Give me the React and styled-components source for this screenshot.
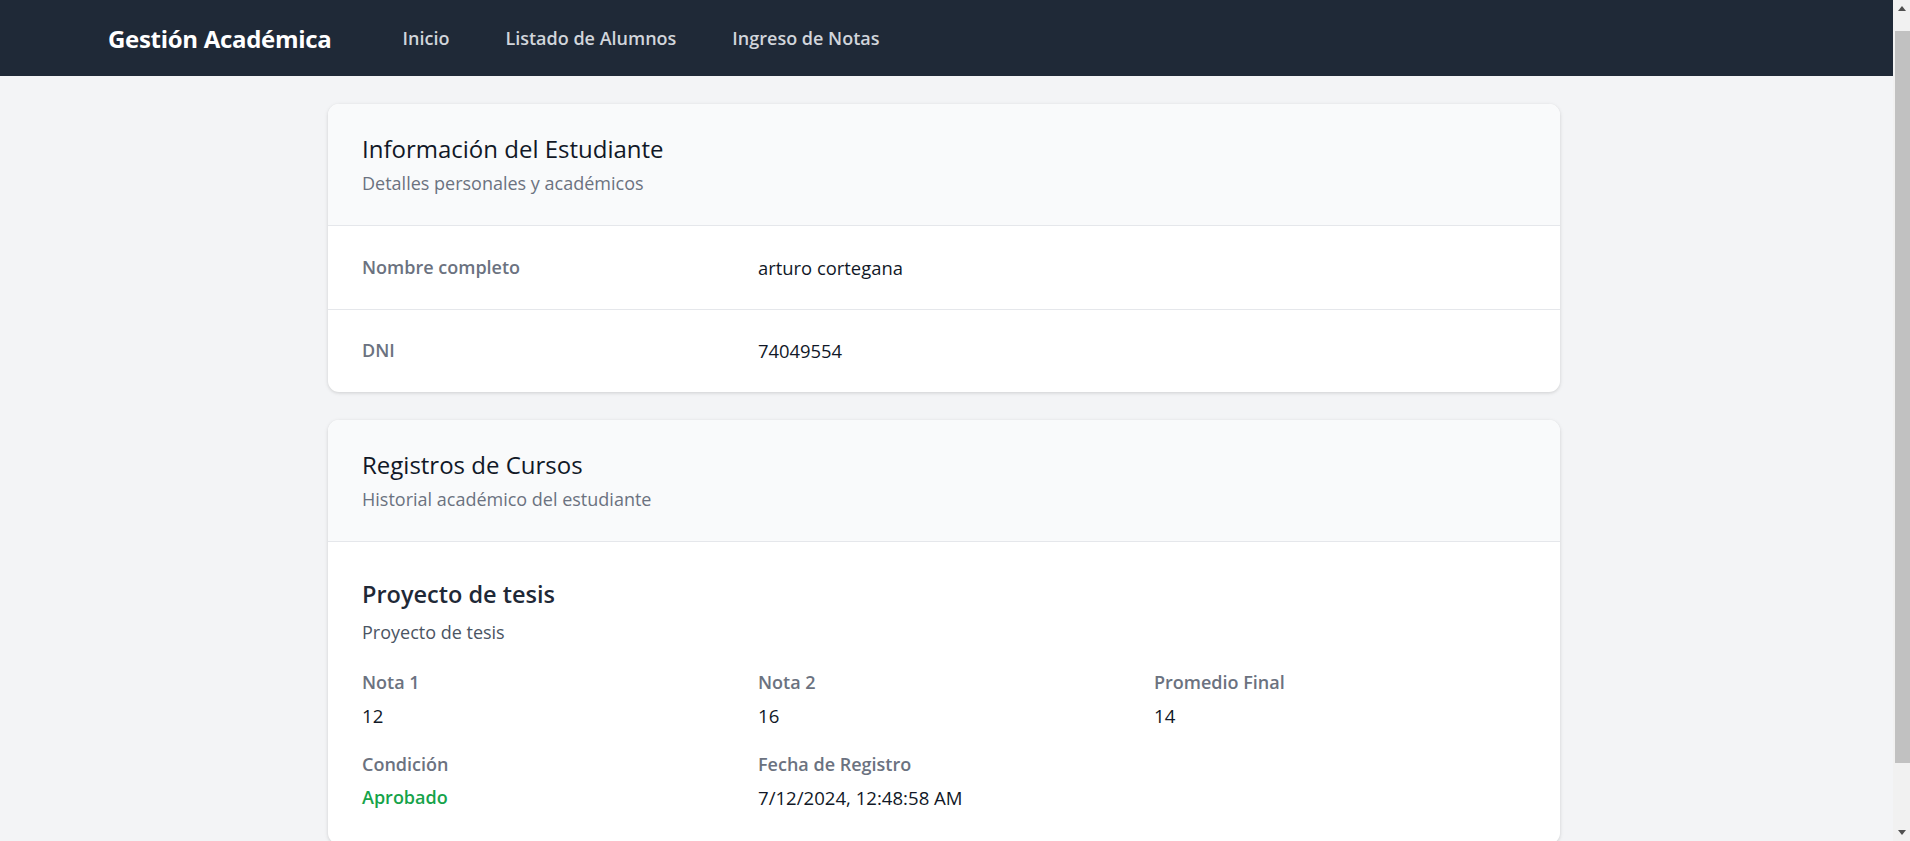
import React from "react";
import styled, { createGlobalStyle } from "styled-components";

const GlobalStyle = createGlobalStyle`
  * {
    box-sizing: border-box;
  }

  html,
  body {
    margin: 0;
    padding: 0;
    height: 100%;
    overflow: hidden;
  }

  body {
    font-family: "Open Sans", "Noto Sans", sans-serif;
    background: #f3f4f6;
    color: #111827;
  }
`;

const student = {
  nombre: "arturo cortegana",
  dni: "74049554",
};

const cursos = [
  {
    id: 1,
    titulo: "Proyecto de tesis",
    descripcion: "Proyecto de tesis",
    nota1: 12,
    nota2: 16,
    promedio: 14,
    condicion: "Aprobado",
    fecha: "7/12/2024, 12:48:58 AM",
  },
];

// window frame: page area + the browser's classic scrollbar on the right
const Page = styled.div`
  display: flex;
  height: 100vh;
`;

const Viewport = styled.div`
  flex: 1;
  min-width: 0;
  overflow: hidden;
  background: #f3f4f6;
`;

const ScrollTrack = styled.div`
  width: 17px;
  flex-shrink: 0;
  background: #f1f1f1;
  display: flex;
  flex-direction: column;
`;

const ScrollArrow = styled.div`
  height: 17px;
  display: flex;
  align-items: center;
  justify-content: center;
  margin-top: ${(p) => (p.$down ? "auto" : "0")};

  &::before {
    content: "";
    border-left: 4.5px solid transparent;
    border-right: 4.5px solid transparent;
    ${(p) =>
      p.$down
        ? "border-top: 5px solid #505050;"
        : "border-bottom: 5px solid #505050;"}
  }
`;

const ScrollThumb = styled.div`
  height: 732px;
  margin: 14px 0 0 2px;
  background: #c1c1c1;
`;

const Navbar = styled.nav`
  height: 76px;
  background: #1f2937;
  display: flex;
  align-items: center;
  gap: 71px;
  padding-left: 108px;
`;

const Brand = styled.a`
  font-size: 24px;
  font-weight: 700;
  color: #ffffff;
  text-decoration: none;
  letter-spacing: -0.3px;
`;

const NavLinks = styled.div`
  display: flex;
  gap: 56px;
`;

const NavLink = styled.a`
  font-size: 18px;
  font-weight: 600;
  color: #d1d5db;
  text-decoration: none;
`;

const Main = styled.main`
  display: flex;
  flex-direction: column;
  align-items: center;
  gap: 28px;
  padding: 28px 5px 68px 0;
`;

const Card = styled.section`
  width: 1232px;
  background: #ffffff;
  border-radius: 11px;
  overflow: hidden;
  box-shadow: 0 1px 4px rgba(0, 0, 0, 0.1), 0 1px 3px rgba(0, 0, 0, 0.06);
`;

const CardHeader = styled.header`
  background: #f9fafb;
  padding: 27.5px 34px;
  border-bottom: 1px solid #e5e7eb;
`;

const CardTitle = styled.h2`
  margin: 0;
  font-size: 24px;
  font-weight: 400;
  line-height: 33px;
  color: #111827;
`;

const CardSubtitle = styled.p`
  margin: 5.5px 0 0;
  font-size: 18px;
  line-height: 27.5px;
  color: #6b7280;
`;

const InfoList = styled.dl`
  margin: 0;
`;

const InfoRow = styled.div`
  display: grid;
  grid-template-columns: repeat(3, 1fr);
  column-gap: 24px;
  padding: 27.5px 34px;
  font-size: 18px;
  line-height: 27.5px;

  & + & {
    border-top: 1px solid #e5e7eb;
  }
`;

const Term = styled.dt`
  font-weight: 600;
  color: #6b7280;
`;

const Detail = styled.dd`
  margin: 0;
  grid-column: span 2;
  color: #111827;
  font-size: 18.4px;
`;

const CourseBody = styled.div`
  padding: 33px 34px;
`;

const CourseTitle = styled.h3`
  margin: 0;
  font-size: 23.5px;
  font-weight: 600;
  line-height: 38.5px;
  color: #1f2937;
`;

const CourseDesc = styled.p`
  margin: 5.5px 0 0;
  font-size: 18px;
  line-height: 27.5px;
  color: #4b5563;
`;

const FieldGrid = styled.div`
  display: grid;
  grid-template-columns: repeat(3, 1fr);
  column-gap: 24px;
  row-gap: 21px;
  margin-top: 22.5px;
  font-size: 18px;
  line-height: 27.5px;
`;

const FieldLabel = styled.div`
  font-weight: 600;
  color: #6b7280;
`;

const FieldValue = styled.div`
  margin-top: 5.5px;
  font-size: ${(p) => (p.$status ? "18px" : "18.6px")};
  color: ${(p) => (p.$status ? "#16a34a" : "#111827")};
  font-weight: ${(p) => (p.$status ? 600 : 400)};
`;

const Field = ({ label, value, status }) => (
  <div>
    <FieldLabel>{label}</FieldLabel>
    <FieldValue $status={status}>{value}</FieldValue>
  </div>
);

const App = () => {
  return (
    <>
      <GlobalStyle />
      <Page>
        <Viewport>
          <Navbar>
            <Brand href="#">Gestión Académica</Brand>
            <NavLinks>
              <NavLink href="#">Inicio</NavLink>
              <NavLink href="#">Listado de Alumnos</NavLink>
              <NavLink href="#">Ingreso de Notas</NavLink>
            </NavLinks>
          </Navbar>

          <Main>
            <Card>
              <CardHeader>
                <CardTitle>Información del Estudiante</CardTitle>
                <CardSubtitle>Detalles personales y académicos</CardSubtitle>
              </CardHeader>
              <InfoList>
                <InfoRow>
                  <Term>Nombre completo</Term>
                  <Detail>{student.nombre}</Detail>
                </InfoRow>
                <InfoRow>
                  <Term>DNI</Term>
                  <Detail>{student.dni}</Detail>
                </InfoRow>
              </InfoList>
            </Card>

            <Card>
              <CardHeader>
                <CardTitle>Registros de Cursos</CardTitle>
                <CardSubtitle>Historial académico del estudiante</CardSubtitle>
              </CardHeader>
              {cursos.map((c) => (
                <CourseBody key={c.id}>
                  <CourseTitle>{c.titulo}</CourseTitle>
                  <CourseDesc>{c.descripcion}</CourseDesc>
                  <FieldGrid>
                    <Field label="Nota 1" value={c.nota1} />
                    <Field label="Nota 2" value={c.nota2} />
                    <Field label="Promedio Final" value={c.promedio} />
                    <Field label="Condición" value={c.condicion} status />
                    <Field label="Fecha de Registro" value={c.fecha} />
                  </FieldGrid>
                </CourseBody>
              ))}
            </Card>
          </Main>
        </Viewport>
        <ScrollTrack aria-hidden="true">
          <ScrollArrow />
          <ScrollThumb />
          <ScrollArrow $down />
        </ScrollTrack>
      </Page>
    </>
  );
};

export default App;
